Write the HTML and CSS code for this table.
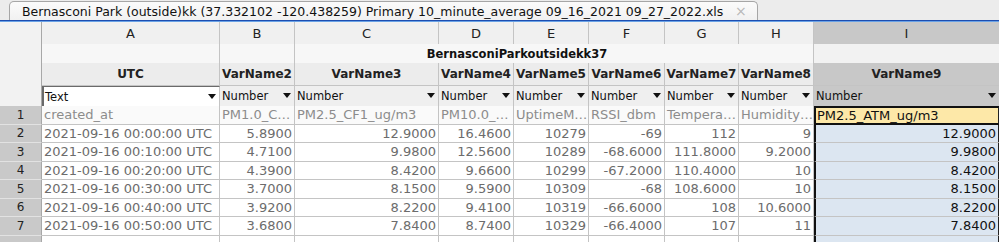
FILE: index.html
```html
<!DOCTYPE html>
<html>
<head>
<meta charset="utf-8">
<link rel="stylesheet" href="styles.css">
</head>
<body>
<div class="tabbar">
  <div class="tab"><span class="tab-title">Bernasconi Park (outside)kk (37.332102 -120.438259) Primary 10_minute_average 09_16_2021 09_27_2022.xls</span><span class="tab-close">×</span></div>
</div>
<div class="tabline"></div>
<div class="sheet">
  <div class="rh hdr"></div>
  <div class="lt">A</div><div class="lt">B</div><div class="lt">C</div><div class="lt">D</div><div class="lt">E</div><div class="lt">F</div><div class="lt">G</div><div class="lt">H</div><div class="lt sel">I</div>

  <div class="rh hdr"></div>
  <div class="tt"></div><div class="tt"></div><div class="tt title">BernasconiParkoutsidekk37</div><div class="tt"></div><div class="tt selt"></div>

  <div class="rh hdr"></div>
  <div class="vn">UTC</div><div class="vn">VarName2</div><div class="vn">VarName3</div><div class="vn">VarName4</div><div class="vn">VarName5</div><div class="vn">VarName6</div><div class="vn">VarName7</div><div class="vn">VarName8</div><div class="vn sel">VarName9</div>

  <div class="rh hdr"></div>
  <div class="ty active">Text</div><div class="ty">Number</div><div class="ty">Number</div><div class="ty">Number</div><div class="ty">Number</div><div class="ty">Number</div><div class="ty">Number</div><div class="ty">Number</div><div class="ty sel">Number</div>

  <div class="rh">1</div>
  <div class="c nm">created_at</div><div class="c nm">PM1.0_C…</div><div class="c nm">PM2.5_CF1_ug/m3</div><div class="c nm">PM10.0_…</div><div class="c nm">UptimeM…</div><div class="c nm">RSSI_dbm</div><div class="c nm">Tempera…</div><div class="c nm">Humidity…</div><div class="c si cur">PM2.5_ATM_ug/m3</div>

  <div class="rh">2</div>
  <div class="c">2021-09-16 00:00:00 UTC</div><div class="c r">5.8900</div><div class="c r">12.9000</div><div class="c r">16.4600</div><div class="c r">10279</div><div class="c r">-69</div><div class="c r">112</div><div class="c r">9</div><div class="c r si">12.9000</div>

  <div class="rh">3</div>
  <div class="c">2021-09-16 00:10:00 UTC</div><div class="c r">4.7100</div><div class="c r">9.9800</div><div class="c r">12.5600</div><div class="c r">10289</div><div class="c r">-68.6000</div><div class="c r">111.8000</div><div class="c r">9.2000</div><div class="c r si">9.9800</div>

  <div class="rh">4</div>
  <div class="c">2021-09-16 00:20:00 UTC</div><div class="c r">4.3900</div><div class="c r">8.4200</div><div class="c r">9.6600</div><div class="c r">10299</div><div class="c r">-67.2000</div><div class="c r">110.4000</div><div class="c r">10</div><div class="c r si">8.4200</div>

  <div class="rh">5</div>
  <div class="c">2021-09-16 00:30:00 UTC</div><div class="c r">3.7000</div><div class="c r">8.1500</div><div class="c r">9.5900</div><div class="c r">10309</div><div class="c r">-68</div><div class="c r">108.6000</div><div class="c r">10</div><div class="c r si">8.1500</div>

  <div class="rh">6</div>
  <div class="c">2021-09-16 00:40:00 UTC</div><div class="c r">3.9200</div><div class="c r">8.2200</div><div class="c r">9.4100</div><div class="c r">10319</div><div class="c r">-66.6000</div><div class="c r">108</div><div class="c r">10.6000</div><div class="c r si">8.2200</div>

  <div class="rh">7</div>
  <div class="c">2021-09-16 00:50:00 UTC</div><div class="c r">3.6800</div><div class="c r">7.8400</div><div class="c r">8.7400</div><div class="c r">10329</div><div class="c r">-66.4000</div><div class="c r">107</div><div class="c r">11</div><div class="c r si">7.8400</div>

  <div class="rh"></div>
  <div class="c"></div><div class="c r"></div><div class="c r"></div><div class="c r"></div><div class="c r"></div><div class="c r"></div><div class="c r"></div><div class="c r"></div><div class="c r si"></div>
</div>
</body>
</html>
```

FILE: styles.css
```css
html, body {
  margin: 0;
  padding: 0;
  overflow: hidden;
  background: #ffffff;
  font-family: "DejaVu Sans", sans-serif;
}

.tabbar {
  height: 20px;
  background: #ececec;
  display: flex;
  align-items: flex-end;
  padding-left: 9px;
  box-sizing: border-box;
}

.tab {
  height: 19px;
  width: 749px;
  box-sizing: border-box;
  border: 1px solid #a6a6a6;
  border-bottom: none;
  border-radius: 5px 5px 0 0;
  background: linear-gradient(#fbfbfb, #f1f1f1);
  display: flex;
  align-items: center;
  padding-left: 12px;
  font-size: 12.5px;
  color: #111;
  white-space: nowrap;
}

.tab-title {
  flex: 1;
  overflow: hidden;
}

.tab-close {
  color: #b8b8b8;
  font-size: 14px;
  width: 22px;
  text-align: left;
}

.tabline {
  height: 1px;
  background: #1d4eb0;
  border-bottom: 1px solid #6aa2e6;
}

.sheet {
  display: grid;
  grid-template-columns: 42px 178px 75px 144px 75px 75px 76px 74px 75px 186px;
  grid-template-rows: 22px 19px 23px 20px repeat(8, 18.5px);
  font-size: 13px;
}

.sheet > div {
  box-sizing: border-box;
  border-right: 1px solid #c4c4c4;
  border-bottom: 1px solid #c4c4c4;
  white-space: nowrap;
  overflow: hidden;
  display: flex;
  align-items: center;
}

.rh {
  background: #c9c9c9;
  color: #222;
  justify-content: center;
  font-size: 12px;
  border-right: 1px solid #a8a8a8 !important;
  border-bottom: 1px solid #e2e2e2 !important;
}

.rh.hdr {
  background: #f2f2f2;
  border-bottom: none !important;
}

.lt {
  background: #f0f0f0;
  justify-content: center;
  color: #222;
  font-size: 13px;
  border-bottom: none !important;
}

.tt {
  background: #f7f7f7;
  border-bottom: none !important;
}

.title {
  grid-column: span 5;
  justify-content: center;
  font-weight: bold;
  font-size: 11.5px;
  color: #111;
  border-right: none !important;
}

.selt {
  background: #f2f2f2;
}

.vn {
  background: #ececec;
  justify-content: center;
  font-weight: bold;
  font-size: 12px;
  color: #222;
}

.sel {
  background: #c8c8c8 !important;
}

.ty {
  background: #efefef;
  font-size: 11.5px;
  color: #111;
  padding-left: 2px;
  position: relative;
  border-bottom: none !important;
}

.ty::after {
  content: "";
  position: absolute;
  right: 3px;
  top: 7px;
  border-left: 4px solid transparent;
  border-right: 4px solid transparent;
  border-top: 5px solid #111;
}

.ty.active {
  background: #ffffff;
  border-left: 2px solid #6a6a6a;
  border-top: 1px solid #6a6a6a;
  padding-left: 1px;
}

.c {
  color: #6c6c6c;
  padding: 0 2px;
  background: #fff;
}

.c.nm {
  color: #8c8c8c;
  background: #fafafa;
}

.c.r {
  justify-content: flex-end;
}

.c.si {
  background: #dce6f1;
  color: #111;
  border-left: 2px solid #111;
  border-right: 2px solid #222 !important;
}

.c.cur {
  background: #fde8a8;
  border-top: 2px solid #111;
  border-bottom: 2px solid #111;
  padding-left: 1px;
}
```
